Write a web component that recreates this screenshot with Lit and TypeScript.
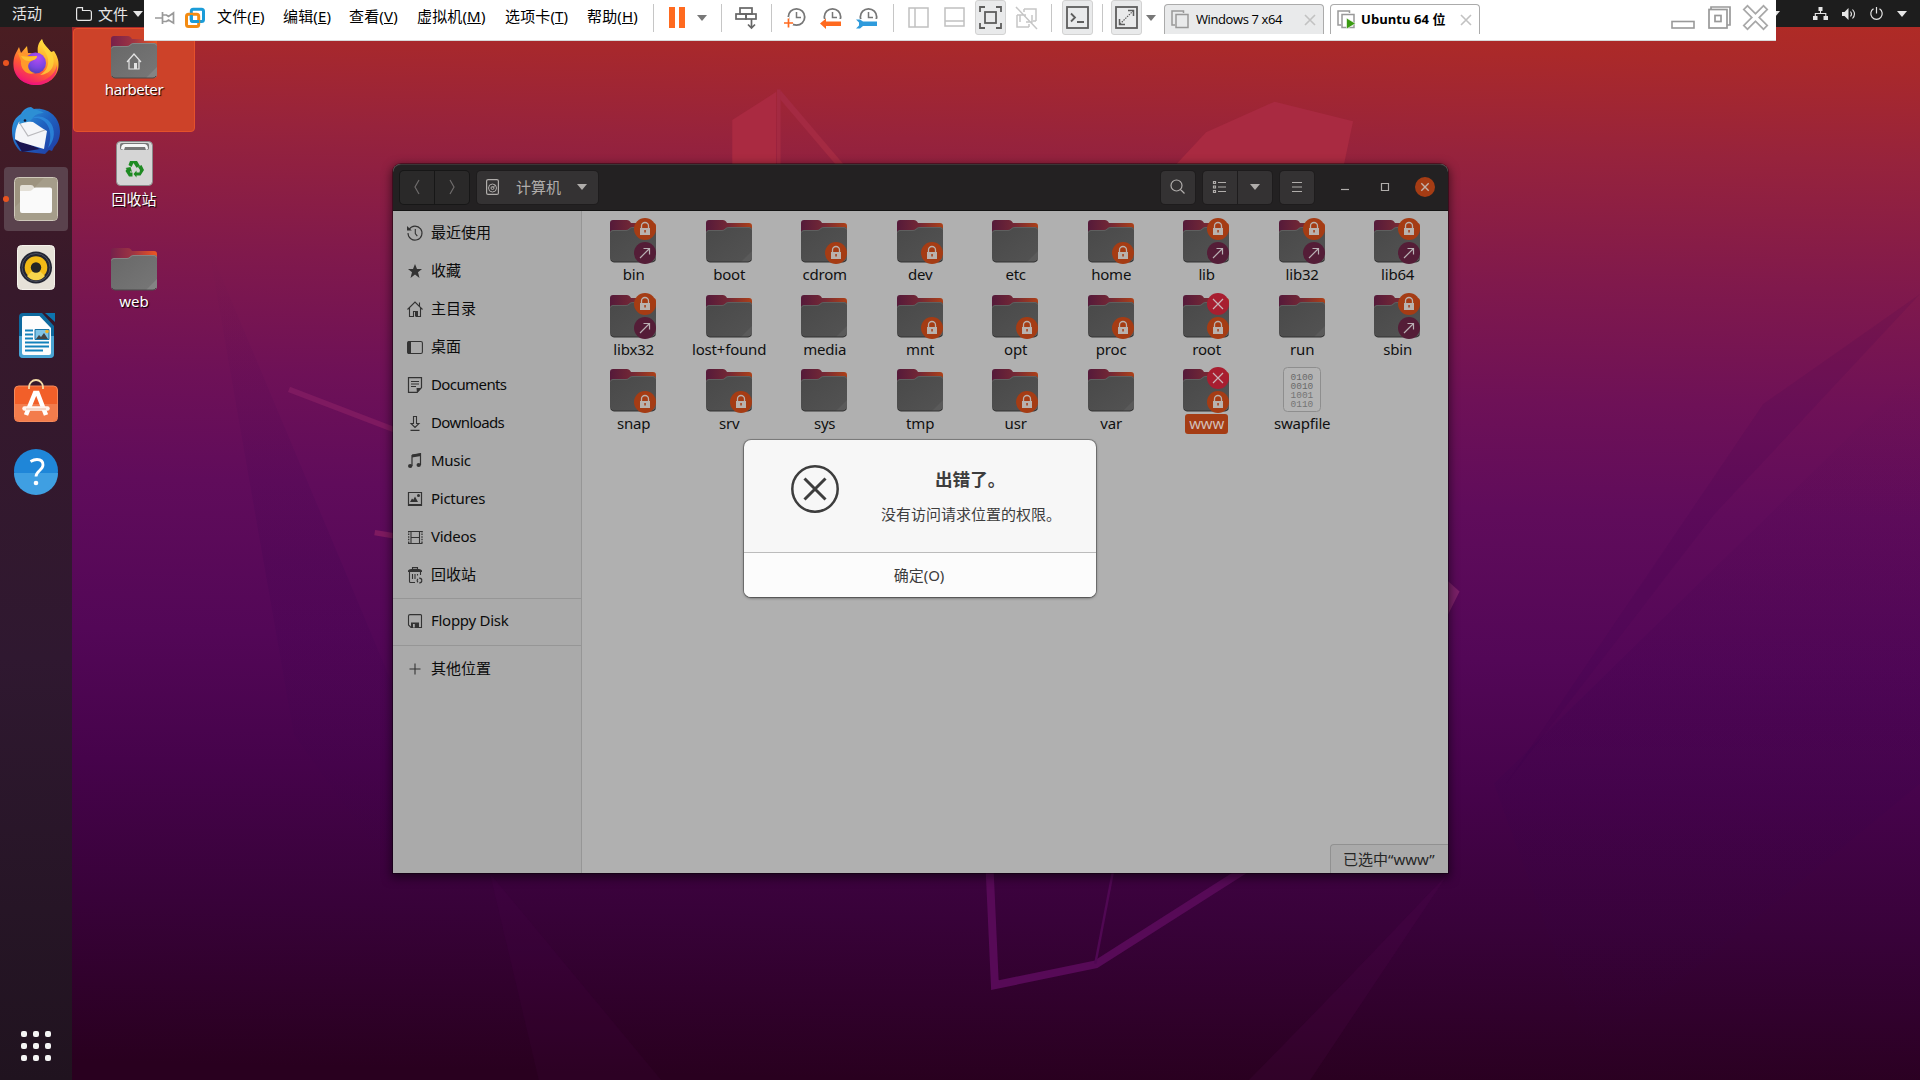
import { LitElement, html, css, svg } from "lit";
import { customElement } from "lit/decorators.js";

type Emblem = "lock" | "link" | "deny";
interface Entry { name: string; emblems?: Emblem[]; kind?: "file"; selected?: boolean; }

const L: Emblem[] = ["lock"];
const LL: Emblem[] = ["lock", "link"];
const DL: Emblem[] = ["deny", "lock"];

const entries: Entry[] = [
  { name: "bin", emblems: LL }, { name: "boot" }, { name: "cdrom", emblems: L }, { name: "dev", emblems: L },
  { name: "etc" }, { name: "home", emblems: L }, { name: "lib", emblems: LL }, { name: "lib32", emblems: LL },
  { name: "lib64", emblems: LL }, { name: "libx32", emblems: LL }, { name: "lost+found" }, { name: "media" },
  { name: "mnt", emblems: L }, { name: "opt", emblems: L }, { name: "proc", emblems: L }, { name: "root", emblems: DL },
  { name: "run" }, { name: "sbin", emblems: LL }, { name: "snap", emblems: L }, { name: "srv", emblems: L },
  { name: "sys" }, { name: "tmp" }, { name: "usr", emblems: L }, { name: "var" },
  { name: "www", emblems: DL, selected: true }, { name: "swapfile", kind: "file" },
];

const icon16 = (body: unknown) => html`<svg class="i16" viewBox="0 0 16 16" width="16" height="16">${body}</svg>`;

const side = {
  recent: svg`<path d="M2.2 4.2A7 7 0 1 1 1 8" fill="none" stroke="#333" stroke-width="1.1"/><path d="M0 1v4.5h4.8z" fill="#333"/><path d="M8.3 4v4.5l2 2.6" fill="none" stroke="#333" stroke-width="1.1"/>`,
  star: svg`<path d="M8 1l2 5h5l-4 3.2L12.5 15 8 11.6 3.500 15 5 9.200 1 6h5z" fill="#333"/>`,
  home: svg`<path d="M.5 8.500L8 1l7.500 7.500M2.500 7v8.500h4v-5h3v5h4V7M12.500 5V1.500" fill="none" stroke="#333" stroke-width="1.100"/><path d="M8 10h3v5.500H8z" fill="#333"/>`,
  desktop: svg`<rect x=".6" y="2.500" width="14.800" height="12" rx="1.500" fill="none" stroke="#333" stroke-width="1.100"/><path d="M.5 3.500Q.5 2 2 2h2v13H2q-1.500 0-1.500-1.500z" fill="#333"/>`,
  documents: svg`<path d="M1.500.6h13v10l-4.500 4.800H1.500z" fill="none" stroke="#333" stroke-width="1.200"/><path d="M4 4.500h8M4 7h8M4 9.500h5" stroke="#333"/><path d="M9.500 11h5l-4.500 5z" fill="#333"/>`,
  downloads: svg`<path d="M6.500 1.500h3v7H12l-4 4-4-4h2.500zM3.500 15.400h9" fill="none" stroke="#333" stroke-width="1.100"/>`,
  music: svg`<path d="M5 13V2.500L13.500 1v11" fill="none" stroke="#333" stroke-width="1.200"/><path d="M5 1.500L14 0v3L5 4.500z" fill="#333"/><ellipse cx="3.200" cy="13" rx="2.200" ry="1.900" fill="#333"/><ellipse cx="11.700" cy="12" rx="2.200" ry="1.900" fill="#333"/>`,
  pictures: svg`<path d="M1.500 1.500h13v13h-13z" fill="none" stroke="#333" stroke-width="1.200"/><path d="M1 13h14v2H1zM3 11l2-3.500 1.300 1.300L8 5.500l3 5.500z" fill="#333"/><circle cx="11.500" cy="4.500" r="1.500" fill="#333"/>`,
  videos: svg`<path d="M1 2.500h14.500M1 14.500h14.500M4 2.500v12M12.500 2.500v12M4 8.500h8.500" stroke="#333" stroke-width="1.100" fill="none"/><path d="M1.700 2v13M15 2v13" stroke="#333" stroke-width="1.300" stroke-dasharray="1.500 1.100"/>`,
  trash: svg`<path d="M1 3.500Q2 2 4 2h8q2 0 3 1.500v1.500H1z" fill="#333"/><path d="M5.500 2V.6h5V2M2.500 5v9.500q0 1 1 1H8M13.500 5v3M5.500 7v5M8 7v5M10.500 7v1.500" fill="none" stroke="#333" stroke-width="1.100"/><circle cx="12.500" cy="13.500" r="2.300" fill="none" stroke="#333" stroke-width="1.200" stroke-dasharray="3.500 1.200"/>`,
  floppy: svg`<path d="M3 1.600h10.500q1 0 1 1v11.900H4l-2.500-2.500V3q0-1.400 1.500-1.400z" fill="none" stroke="#333" stroke-width="1.100"/><path d="M4 9.500h8v5.500H4z" fill="#333"/><path d="M6 11h1.800v3.500H6z" fill="#aaa"/>`,
  plus: svg`<path d="M8 2.500v11M2.500 8h11" stroke="#333" stroke-width="1.100"/>`,
};

const places: [unknown, string, string][] = [
  [side.recent, "最近使用", "zh"], [side.star, "收藏", "zh"], [side.home, "主目录", "zh"], [side.desktop, "桌面", "zh"],
  [side.documents, "Documents", "tight"], [side.downloads, "Downloads", "tight"], [side.music, "Music", ""],
  [side.pictures, "Pictures", ""], [side.videos, "Videos", ""], [side.trash, "回收站", "zh"],
];

const emblem = (e: Emblem, y: number) => {
  const fill = e === "lock" ? "#a53c14" : e === "link" ? "#541d37" : "#a81e30";
  return svg`<circle cx="35" cy=${y} r="11" fill=${fill}/>
    ${e === "lock" ? svg`<path d=${`M30 ${y - 1}h10v7H30z`} fill="#b9b2ae"/><path d=${`M31.500 ${y - 1}v-2a3.500 3.500 0 0 1 7 0v2`} fill="none" stroke="#b9b2ae" stroke-width="1.300"/><path d=${`M34.300 ${y + 1}h1.500v2.500h-1.500z`} fill="#a53c14"/>` : ""}
    ${e === "link" ? svg`<path d=${`M30 ${y + 5}l9.500-9.500M33.500 ${y - 4.500}h6v6`} fill="none" stroke="#b9b0b4" stroke-width="1.200"/>` : ""}
    ${e === "deny" ? svg`<path d=${`M30 ${y - 5}l10 10M40 ${y - 5}l-10 10`} stroke="#c9b4b8" stroke-width="1.200"/>` : ""}`;
};

const clock = (extra: unknown) => html`<svg width="22" height="22" viewBox="0 0 22 22">
  <circle cx="12.500" cy="10" r="8.200" fill="none" stroke="#777" stroke-width="1.800"/><path d="M12.500 5v5.500h4.500" fill="none" stroke="#777" stroke-width="1.500"/>${extra}</svg>`;

@customElement("app-root")
export class AppRoot extends LitElement {
  static styles = css`
    :host { display: block; width: 1920px; height: 1080px; font-family: "Noto Sans", "Noto Sans CJK SC", sans-serif; font-size: 15px; line-height: 1; }
    * { box-sizing: border-box; }
    svg { display: block; flex: none; overflow: visible; }
    .screen { position: relative; width: 1920px; height: 1080px; overflow: hidden; display: flex; flex-direction: column; }
    .wall { position: absolute; inset: 0; }
    .defs { position: absolute; width: 0; height: 0; }
    .top { position: relative; height: 27px; background: #1d1d1d; color: #e6e6e6; display: flex; align-items: center; padding: 0 13px 0 12px; }
    .top .act { width: 64px; }
    .top .app { display: flex; align-items: center; gap: 6px; padding-top: 1px; }
    .top .app span { margin-right: -1px; }
    .top .tray { margin-left: auto; display: flex; align-items: center; gap: 14px; }
    .main { position: relative; flex: 1; display: flex; min-height: 0; }
    .dock { width: 72px; background: linear-gradient(#4a1d22, #37192b 25%, #2f1830 60%, #20131f); display: flex; flex-direction: column; align-items: center; padding-top: 2px; }
    .slot { width: 72px; height: 68px; display: flex; align-items: center; justify-content: center; position: relative; }
    .slot.first svg { margin-bottom: 2px; }
    .slot.bag svg { margin-bottom: 5px; }
    .slot.on::before { content: ""; position: absolute; inset: 2px 4px; border-radius: 4px; background: #5a424d; }
    .slot svg { position: relative; }
    .slot.run::after { content: ""; position: absolute; left: 3px; top: 31px; width: 6px; height: 6px; border-radius: 50%; background: #e95420; }
    .apps { margin-top: auto; margin-bottom: 19px; display: grid; grid-template-columns: repeat(3, 6px); gap: 6px; }
    .apps i { width: 6px; height: 6px; border-radius: 2px; background: #f4f4f4; }
    .desk { padding: 1px; display: flex; flex-direction: column; gap: 2px; }
    .di { width: 122px; height: 104px; display: flex; flex-direction: column; align-items: center; padding-top: 7px; gap: 4px; color: #fff; text-shadow: 1px 1px 1px #000; line-height: 18px; }
    .di.dir { padding-top: 8px; gap: 1px; }
    .di.sel { background: #cd4229; border: 1px solid #e5512a; border-radius: 4px; padding-top: 7px; letter-spacing: -0.4px; }
    .vm { position: absolute; left: 144px; top: 0; width: 1632px; height: 41px; background: #fff; border-bottom: 1px solid #d8d8d8; display: flex; color: #000; }
    .vm .cell { display: flex; justify-content: center; align-items: center; height: 35px; flex: none; }
    .vm .tool svg { margin-right: 2px; }
    .vm .sep { width: 1px; height: 28px; margin-top: 4px; background: #c6c6c6; flex: none; }
    .vm .menu { display: grid; grid-template-columns: 66px 66px 68px 88px 82px 66px; padding-top: 9px; margin-left: 12px; letter-spacing: 0.15px; white-space: nowrap; }
    .vm .on { background: #e9eaeb; border: 1px solid #d2d2d2; border-radius: 3px; }
    .vm .on svg { margin-right: 1px; }
    .tab { margin-top: 4px; height: 30px; border: 1px solid #ababab; border-bottom: none; border-radius: 4px 4px 0 0; display: flex; align-items: center; padding: 0 7px 0 6px; gap: 6px; font-family: "Open Sans", "Noto Sans CJK SC", sans-serif; font-size: 13px; flex: none; white-space: nowrap; letter-spacing: -0.4px; }
    .tab .x { margin-left: auto; }
    .tab.idle { background: #e9eaeb; }
    .tab b { letter-spacing: 0.05px; margin-left: -1px; }
    .wb { margin-left: auto; display: flex; padding-right: 3px; }
    .win { position: absolute; left: 393px; top: 164px; width: 1055px; height: 709px; border-radius: 8px 8px 0 0; background: #b0b0b0; box-shadow: 0 0 0 1px rgba(0,0,0,.35), 0 3px 10px 2px rgba(0,0,0,.5); display: flex; flex-direction: column; }
    .head { height: 47px; background: #232122; border-radius: 8px 8px 0 0; border-top: 1px solid #3a3536; border-bottom: 1px solid #141414; display: flex; align-items: center; padding: 0 13px 1px 7px; color: #b0adab; }
    .btn { height: 33px; background: #343233; border-radius: 4px; display: flex; align-items: center; justify-content: center; width: 34px; box-shadow: 0 0 0 1px #1e1c1d; }
    .btn.nav { background: #2a2929; box-shadow: 0 0 0 1px #171717; }
    .btn.l { border-radius: 4px 0 0 4px; }
    .btn.r { border-radius: 0 4px 4px 0; margin-left: 1px; }
    .path { width: 121px; margin-left: 8px; justify-content: flex-start; padding-left: 9px; }
    .path span { margin: 0 16px 0 17px; }
    .ctl { width: 40px; display: flex; justify-content: center; }
    .body { flex: 1; display: flex; min-height: 0; }
    .side { width: 189px; background: #aaa; border-right: 1px solid #969696; padding-top: 3px; color: #0c0c0c; }
    .row { height: 38px; display: flex; align-items: center; gap: 8px; padding-left: 14px; font-size: 15px; }
    .row span { letter-spacing: -0.28px; padding-bottom: 1px; }
    .row span.zh { letter-spacing: 0; }
    .row span.tight { letter-spacing: -0.6px; }
    .ln { height: 1px; background: #969696; margin: 4px 0 3px; }
    .ln.second { margin: 5px 0 4px; }
    .content { flex: 1; display: flex; flex-direction: column; position: relative; }
    .grid { display: grid; grid-template-columns: repeat(9, 95.5px); grid-auto-rows: 74.5px; padding: 4px 0 0 3.4px; color: #101010; }
    .it { display: flex; flex-direction: column; align-items: center; }
    .it span { margin: 2px 0 0 1px; padding: 1px 4px 2px; line-height: 17px; border-radius: 3px; letter-spacing: -0.2px; }
    .it.sel span { background: #a53c14; color: #d2bfb7; }
    .status { margin-top: auto; align-self: flex-end; width: 118px; height: 29px; border: 1px solid #919191; border-right: none; border-bottom: none; border-radius: 4px 0 0 0; background: #aaa; padding: 7px 0 0 12px; color: #262626; white-space: nowrap; }
    .dlg { position: absolute; left: 744px; top: 440px; width: 352px; height: 157px; border-radius: 7px; background: #f7f7f7; box-shadow: 0 0 0 1px rgba(0,0,0,.25), 0 1px 3px rgba(0,0,0,.5); display: flex; flex-direction: column; color: #3d3d3d; }
    .msg { flex: 1; display: flex; padding: 25px 20px 0 47px; }
    .msg .tx { margin-left: 42px; display: flex; flex-direction: column; gap: 18px; font-family: "Noto Sans CJK SC", sans-serif; white-space: nowrap; }
    .msg h1 { font-size: 17.6px; margin: 5px 0 0 54px; font-weight: 700; line-height: 18px; }
    .ok { height: 45px; border-top: 1px solid #bcbcbc; background: #fcfcfc; border-radius: 0 0 7px 7px; display: flex; align-items: center; justify-content: center; padding-right: 2px; }
  `;

  private caret(c: string, w = 10) {
    return html`<svg width=${w} height="6" viewBox="0 0 10 6"><path d="M0 0h10L5 6z" fill=${c}/></svg>`;
  }

  private wallpaper() {
    return html`<svg class="wall" width="1920" height="1080" viewBox="0 0 1568 882">
      <defs><linearGradient id="wg" x1="0.52" y1="0" x2="0.48" y2="1">
        <stop offset="0" stop-color="#b02b25"/><stop offset=".04" stop-color="#aa292a"/><stop offset=".13" stop-color="#97233c"/><stop offset=".25" stop-color="#80194c"/>
        <stop offset=".36" stop-color="#6e1157"/><stop offset=".46" stop-color="#600c5b"/><stop offset=".6" stop-color="#530757"/><stop offset=".72" stop-color="#46034b"/>
        <stop offset=".85" stop-color="#380239"/><stop offset="1" stop-color="#29001f"/></linearGradient>
        <linearGradient id="fa" x1="0" y1="0" x2="0" y2="1"><stop offset="0" stop-color="#30004c" stop-opacity="0"/><stop offset=".5" stop-color="#30004c" stop-opacity=".14"/><stop offset="1" stop-color="#30004c" stop-opacity="0"/></linearGradient></defs>
      <rect width="1568" height="882" fill="url(#wg)"/>
      <path d="M170 200L321 560V713L240 600z" fill="url(#fa)"/>
      <path d="M1568 240L1400 420L1230 640L1440 330z" fill="#30004c" opacity=".1"/>
      <path d="M1568 300V640L1300 860L1220 640z" fill="url(#fa)"/>
      <path d="M1183 713L1070 882H1020L1100 800z" fill="#6a1060" opacity=".12"/>
      <path d="M400 713L540 882H440z" fill="#6a1060" opacity=".08"/>
      <path d="M598 98L634 75V136H598z" fill="#aa2a41"/><path d="M636 76L688 137" stroke="#a42a42" stroke-width="5"/><path d="M636 73V137" stroke="#a42a42" stroke-width="3"/>
      <path d="M985 108L1041 83L1105 99L1097 137H958z" fill="#a92a41"/>
      <path d="M236 318L330 354M306 435L330 439" stroke="#7e1a60" stroke-width="4.500"/>
      <path d="M1182 474l10 9-10 20z" fill="#7a2068"/>
      <path d="M808 706L812.500 804.500L895 787.500L1020 708" fill="none" stroke="#570a57" stroke-width="6.500"/>
      <path d="M910 706L894.500 787" stroke="#500853" stroke-width="2"/>
    </svg>`;
  }

  private symbols() {
    return html`<svg class="defs"><defs>
      <linearGradient id="fb" x1="0" y1="0" x2="1" y2="0"><stop offset="0" stop-color="#77214b"/><stop offset=".5" stop-color="#a03542"/><stop offset="1" stop-color="#ee5722"/></linearGradient>
      <linearGradient id="fbd" x1="0" y1="0" x2="1" y2="0"><stop offset="0" stop-color="#551a3a"/><stop offset=".5" stop-color="#742835"/><stop offset="1" stop-color="#ad4118"/></linearGradient>
      <linearGradient id="ff" x1="0" y1="0" x2="1" y2="1"><stop offset="0" stop-color="#686868"/><stop offset="1" stop-color="#777"/></linearGradient>
      <linearGradient id="ffd" x1="0" y1="0" x2="1" y2="1"><stop offset="0" stop-color="#494949"/><stop offset="1" stop-color="#535353"/></linearGradient>
      <symbol id="folder" viewBox="0 0 46 43"><path d="M3 0h14q2 0 3 1.500l1 1.500h22q3 0 3 3v20H0V3q0-3 3-3z" fill="url(#fb)"/>
        <path d="M0 13q0-3 3-3h13q2 0 3-1.200l1-.9q1-.9 3-.9h20q3 0 3 3v28q0 4-4 4H4q-4 0-4-4z" fill="url(#ff)"/><path d="M.5 12.500q.5-2 2.500-2h13q2 0 3-1.200l1-.9q1-.9 3-.9h20q2 0 2.500 2" fill="none" stroke="#8b8b8b" stroke-width=".8"/><path d="M46 31L35 42h7q4 0 4-4z" fill="#838383"/><path d="M1 40q1 2 3 2h38q2 0 3-2" fill="none" stroke="#484848"/></symbol>
      <symbol id="folderd" viewBox="0 0 46 43"><path d="M3 0h14q2 0 3 1.500l1 1.500h22q3 0 3 3v20H0V3q0-3 3-3z" fill="url(#fbd)"/>
        <path d="M0 13q0-3 3-3h13q2 0 3-1.200l1-.9q1-.9 3-.9h20q3 0 3 3v28q0 4-4 4H4q-4 0-4-4z" fill="url(#ffd)"/><path d="M.5 12.500q.5-2 2.500-2h13q2 0 3-1.200l1-.9q1-.9 3-.9h20q2 0 2.500 2" fill="none" stroke="#656565" stroke-width=".8"/><path d="M46 31L35 42h7q4 0 4-4z" fill="#5a5a5a"/><path d="M1 40q1 2 3 2h38q2 0 3-2" fill="none" stroke="#333"/></symbol>
    </defs></svg>`;
  }

  private dock() {
    return html`<div class="dock">
      <div class="slot run first"><svg width="46" height="46" viewBox="0 0 46 46">
        <defs><linearGradient id="fx" x1=".8" y1="0" x2=".3" y2="1"><stop offset="0" stop-color="#fff04a"/><stop offset=".35" stop-color="#ffb62e"/><stop offset=".65" stop-color="#ff5b34"/><stop offset="1" stop-color="#f0107a"/></linearGradient>
        <radialGradient id="fp" cx=".6" cy=".25" r=".8"><stop offset="0" stop-color="#b44cf2"/><stop offset=".6" stop-color="#7a45e0"/><stop offset="1" stop-color="#4f3fae"/></radialGradient></defs>
        <path d="M29 0c1 5 5 8 9 13l3-1c3 5 5 9 4.500 15C45 38 35 46 23 46S1 38 .5 27C0 20 2 15 4 12l2-4 2 6 6-7 1 7c6 0 8 3 10 2 0-4-2-10 4-16z" fill="url(#fx)"/>
        <path d="M2 31c4 12 17 15 27 11 9-3 14-10 15-16 1 12-9 20-21 20C11 46 3 39 2 31z" fill="#ee1280" opacity=".6"/>
        <circle cx="22.500" cy="24" r="10.500" fill="url(#fp)"/><path d="M5 14c4-1 7 1 10 3h9c0 4-5 4-7 6-4 4-1 10 5 11-8 3-15-4-14-12z" fill="#ff9a2a"/><path d="M8 17l8 1 8-1c0 4-5 4-7 5-4 0-7-1-9-5z" fill="#ffc02f"/><path d="M29 0c-3 8 5 12 6 20s-3 13-8 16c13-1 17-13 11-23-4-5-8-8-9-13z" fill="#ffd83a" opacity=".75"/></svg></div>
      <div class="slot"><svg width="48" height="48" viewBox="0 0 48 48">
        <defs><linearGradient id="tb" x1="0" y1="0" x2="1" y2="1"><stop offset="0" stop-color="#35a8e8"/><stop offset=".5" stop-color="#1f62c0"/><stop offset="1" stop-color="#2038a0"/></linearGradient></defs>
        <path d="M19 0l3 2c14-2 26 8 26 22 0 8-3 13-6 16l-2 4-3-1-4 4-9-1L8 44C2 38 0 31 0 24 0 15 4 10 9 7c2-4 6-7 10-7z" fill="url(#tb)"/>
        <path d="M3 33l7 12L28 42 12 35z" fill="#1a1450"/><path d="M7 15l4-1 10 1 12 8 2 1-3 18L8 35 3 32c0-7 1-12 4-17z" fill="#f4f5f8"/><path d="M7 15l9 14 17-6" fill="none" stroke="#b9b9bd" stroke-width="1.200"/>
        <path d="M10 9c5-8 14-8 22-3-5 0-10 2-12 6-3 4-8 3-13 5z" fill="#2d8fd4"/><path d="M18 13c4-4 14-2 18 6 3 6 3 14 0 22 5-6 8-14 4-23C35 9 24 7 18 13z" fill="#2f8fe0" opacity=".75"/><circle cx="13" cy="13.500" r="1.300" fill="#14142c"/></svg></div>
      <div class="slot on run"><svg width="44" height="44" viewBox="0 0 44 44"><rect x=".5" y=".5" width="43" height="43" rx="4" fill="#9d937f" stroke="#cfc9bb"/><path d="M1 30L30 1h10q3 0 3 3v36q0 3-3 3H4q-3 0-3-3z" fill="#a59d8a"/><path d="M6 10q0-2 2-2h9q2 0 3 2l1 2h12v8H6z" fill="#e3dfd6"/><path d="M6 14h9q2 0 3-1l1.500-1.500q1-1 2.500-1h14q2 0 2 2V34q0 2-2 2H8q-2 0-2-2z" fill="#fafafa"/></svg></div>
      <div class="slot"><svg width="38" height="45" viewBox="0 0 38 45"><rect x=".5" y=".5" width="37" height="44" rx="4" fill="#e6e1d8" stroke="#f5f2ec"/><circle cx="19" cy="22.500" r="16" fill="#232532"/><circle cx="19" cy="22.500" r="14" fill="none" stroke="#4c5060"/><circle cx="19" cy="22.500" r="11.300" fill="#f2ba16"/><path d="M19 22.500L10 31A11.500 11.500 0 0 0 28 31z" fill="#f7d44c"/><circle cx="19" cy="22.500" r="5.200" fill="#252525"/></svg></div>
      <div class="slot"><svg width="37" height="45" viewBox="0 0 37 45"><path d="M5 0h19l12 13v28q0 4-4 4H5q-4 0-4-4V4q0-4 4-4z" fill="#0e6a9f"/><path d="M1 23h35v18q0 4-4 4H5q-4 0-4-4z" fill="#4aa4d3"/><path d="M27 0h10v9z" fill="#0d74ae"/><path d="M6 3h15.500L33 15v25q0 2-2 2H6q-2 0-2-2V5q0-2 2-2z" fill="#fdfdfd"/><path d="M7 17.500h8M7 21.500h8M7 25.500h8M7 29.500h24M7 33.500h24M7 37.500h18" stroke="#1281bb" stroke-width="2"/><path d="M17 16.500h14v10H17z" fill="#7fc4e6" stroke="#1674a8"/><path d="M18 26l3-4 2 2 3-4 4 6z" fill="#444"/><circle cx="29" cy="18.500" r="1.800" fill="#efb52a"/></svg></div>
      <div class="slot bag"><svg width="44" height="42" viewBox="0 0 44 42"><rect x=".5" y="6" width="43" height="35.500" rx="4" fill="#f25f29" stroke="#f58a5c"/><path d="M1 24h42v13q0 4-4 4H5q-4 0-4-4z" fill="#f37c4c"/><path d="M15 9V7a7 7 0 0 1 14 0v2" fill="none" stroke="#f6dca8" stroke-width="1.800"/><path d="M12 35L21 13h2.500L32 35" fill="none" stroke="#fff" stroke-width="4.500"/><path d="M10.500 28.500h23" stroke="#fff5ef" stroke-width="4.500" stroke-linecap="round"/><path d="M12 29h20" stroke="#e8bba6" stroke-width="1"/></svg></div>
      <div class="slot"><svg width="44" height="44" viewBox="0 0 44 44"><circle cx="22" cy="22" r="22" fill="#1f86d8"/><path d="M0 24h44a22 22 0 0 1-44 0z" fill="#3f9fe2"/><path d="M16.500 12.500q3.500-2 6.500-2 6 0 6 5.500c0 5-7 6-7 11.500" fill="none" stroke="#fff" stroke-width="2.800"/><circle cx="22" cy="34" r="2.300" fill="#fff"/></svg></div>
      <div class="apps">${Array.from({ length: 9 }, () => html`<i></i>`)}</div>
    </div>`;
  }

  private desktop() {
    return html`<div class="desk">
      <div class="di dir sel"><svg width="46" height="43"><use href="#folder"/><path d="M16 26l7-8 7 8M18 24v9h10v-9" fill="none" stroke="#e4e4e4" stroke-width="1.200"/><path d="M23 27h3v6h-3z" fill="#e4e4e4"/></svg><span>harbeter</span></div>
      <div class="di"><svg width="37" height="45" viewBox="0 0 37 45"><rect x=".5" y=".5" width="36" height="44" rx="4" fill="#d5d5d5" stroke="#8a8a8a"/><rect x="4" y="2" width="29" height="7" rx="2" fill="#777"/><path d="M5 8q0-5 4-5h19q4 0 4 5l-2 1-1-3H9L8 9z" fill="#f6f6f6"/><g fill="#1e8a22"><path d="M14 20h7l3 5-3.500 1.800L17.500 22l-2 4-3-2z"/><path d="M25.500 24l2.500 5-3.500 5.500h-4v2L17.500 33l3-3.500v2h3L24 29l-2-3z"/><path d="M9.500 27l5-1 1.500 5-1.500-1-.5 1.500h2.500v4H13l-3.500-5.500 1.200-2z"/></g></svg><span>回收站</span></div>
      <div class="di dir"><svg width="46" height="43"><use href="#folder"/></svg><span>web</span></div>
    </div>`;
  }

  private toolbar() {
    const menus: [string, string][] = [["文件", "F"], ["编辑", "E"], ["查看", "V"], ["虚拟机", "M"], ["选项卡", "T"], ["帮助", "H"]];
    const cell = (ml: number, w: number, body: unknown, cls = "tool") => html`<div class="cell ${cls}" style="margin-left:${ml}px;width:${w}px">${body}</div>`;
    const sep = (ml: number) => html`<i class="sep" style="margin-left:${ml}px"></i>`;
    const pages = (play: boolean) => html`<svg width="19" height="20" viewBox="0 0 19 20"><path d="M12.500 3V1H1v14h3" fill="none" stroke="#999" stroke-width="1.500"/><rect x="5" y="4.500" width="12" height="13" fill="none" stroke="#999" stroke-width="1.500"/>${play ? svg`<path d="M9.500 8v11l9-5.500z" fill="#3b9b12" stroke="#fff" stroke-width=".6"/>` : ""}</svg>`;
    const x = html`<svg class="x" width="12" height="12" viewBox="0 0 12 12"><path d="M1 1l10 10M11 1L1 11" stroke="#c2c2c2" stroke-width="1.600"/></svg>`;
    return html`<div class="vm">
      ${cell(0, 41, html`<svg width="20" height="14" viewBox="0 0 20 14"><path d="M0 7h7M7.500 1v12M7.500 4h4l2 1.500L18.500 2v10L13.500 9l-2 1.500h-4" fill="none" stroke="#999" stroke-width="1.700"/></svg>`, "")}
      ${cell(0, 20, html`<svg width="20" height="20" viewBox="0 0 20 20"><rect x="6.300" y="1.300" width="12.200" height="12.200" rx="2" fill="none" stroke="#1b9cd8" stroke-width="3"/><rect x="1.500" y="6.300" width="12.200" height="12.200" rx="2" fill="none" stroke="#f38b12" stroke-width="3"/><path d="M6.300 7v4.500q0 2 2 2h6" fill="none" stroke="#1b9cd8" stroke-width="3"/></svg>`, "")}
      <div class="menu">${menus.map(([t, k]) => html`<span>${t}(<u>${k}</u>)</span>`)}</div>
      ${sep(0)}
      ${cell(8, 32, html`<svg width="16" height="21"><path d="M0 0h6v21H0zM10 0h6v21h-6z" fill="#ff6a1f"/></svg>`)}
      ${cell(1, 16, this.caret("#777"))}${sep(10)}
      ${cell(12, 26, html`<svg width="22" height="22" viewBox="0 0 22 22" fill="none" stroke="#666" stroke-width="1.700"><rect x="5" y="1" width="12" height="6"/><rect x="1" y="7" width="10" height="5"/><rect x="11" y="7" width="10" height="5"/><path d="M16.500 12v9M13 17.500l3.500 3.500 3.500-3.500"/></svg>`)}${sep(11)}
      ${cell(6, 36, clock(svg`<path d="M0 10h5v5H0z" fill="#fff"/><path d="M0 16h9M4.500 11.500v9" stroke="#fff" stroke-width="4"/><path d="M0 16h9M4.500 11.500v9" stroke="#ff6a1f" stroke-width="1.700"/>`))}
      ${cell(0, 36, clock(svg`<path d="M0 12h22v9H0z" fill="#fff"/><path d="M0 16.500l6-5v3h15v4.500H6v3z" fill="#ff6a1f"/>`))}
      ${cell(0, 36, clock(svg`<path d="M0 12h22v9H0z" fill="#fff"/><path d="M0 12.500h4l3 2h14v4.500H7l-3 2.500H0l3-3v-3z" fill="#2f9bdc"/>`))}${sep(7)}
      ${cell(7, 36, html`<svg width="21" height="21" viewBox="0 0 21 21" fill="none" stroke="#c0c0c0" stroke-width="1.500"><rect x="1" y="1" width="19" height="19"/><path d="M7 1v19"/></svg>`)}
      ${cell(0, 36, html`<svg width="21" height="21" viewBox="0 0 21 21" fill="none" stroke="#c0c0c0" stroke-width="1.500"><rect x="1" y="1" width="19" height="18"/><path d="M1 14h19"/></svg>`)}
      ${cell(2, 31, html`<svg width="23" height="23" viewBox="0 0 23 23" fill="none" stroke="#5e5e5e" stroke-width="1.800"><path d="M1 6V1h5M17 1h5v5M22 17v5h-5M6 22H1v-5"/><rect x="6" y="6" width="11" height="11"/></svg>`, "on")}
      ${cell(3, 36, html`<svg width="21" height="22" viewBox="0 0 21 22" fill="none" stroke="#c6c6c6" stroke-width="1.500"><path d="M8 2h12v12M1 8v12h12M4 15V8h6M16 8v7h-6M8 2v3M20 14h-3M1 8h3M13 20v-3M0 0l21 22"/></svg>`)}${sep(6)}
      ${cell(10, 31, html`<svg width="23" height="23" viewBox="0 0 23 23" fill="none" stroke="#5e5e5e" stroke-width="1.800"><rect x="1" y="1" width="21" height="21"/><path d="M5 7.500l4 4-4 4M11 16h7"/></svg>`, "on")}${sep(9)}
      ${cell(8, 31, html`<svg width="23" height="23" viewBox="0 0 23 23" fill="none" stroke="#5e5e5e" stroke-width="1.800"><rect x="1" y="1" width="21" height="21"/><path d="M13 4.500h5.500V10M10 18.500H4.500V13" stroke-width="1.500"/><path d="M5 18L18 5" stroke-width="1.200" stroke-dasharray="1.500 1"/></svg>`, "on")}
      ${cell(0, 18, this.caret("#777"), "")}
      <div class="tab idle" style="margin-left:4px;width:160px">${pages(false)}<span>Windows 7 x64</span>${x}</div>
      <div class="tab" style="margin-left:6px;width:150px">${pages(true)}<b>Ubuntu 64 位</b>${x}</div>
      <div class="wb">
        ${cell(0, 36, html`<svg width="24" height="23" viewBox="0 0 24 23"><rect x="1" y="15.500" width="22" height="6.500" fill="#fff" stroke="#999" stroke-width="1.600"/></svg>`, "")}
        ${cell(0, 36, html`<svg width="23" height="23" viewBox="0 0 23 23" fill="none" stroke="#999" stroke-width="1.700"><path d="M3 3V1h19v18h-3"/><rect x="1" y="3.500" width="18" height="18.500"/><rect x="7" y="9.500" width="6" height="6"/></svg>`, "")}
        ${cell(0, 36, html`<svg width="23" height="23" viewBox="0 0 23 23"><path d="M3.500 3.500l16 16M19.500 3.500l-16 16" stroke="#a8a8a8" stroke-width="7" stroke-linecap="square"/><path d="M3.500 3.500l16 16M19.500 3.500l-16 16" stroke="#fff" stroke-width="3.600" stroke-linecap="square"/></svg>`, "")}
      </div>
    </div>`;
  }

  private item(e: Entry) {
    const em = e.emblems ?? [];
    const art = e.kind === "file"
      ? html`<svg width="46" height="48" viewBox="0 0 46 48"><rect x="4.500" y="3.500" width="37" height="44" rx="4" fill="#b4b4b4" stroke="#8e8e8e"/><g font-family="Liberation Mono" font-size="9.500" fill="#6a6a6a"><text x="11.500" y="16">0100</text><text x="11.500" y="25">0010</text><text x="11.500" y="34" fill="#757575">1001</text><text x="11.500" y="43" fill="#757575">0110</text></g></svg>`
      : html`<svg width="46" height="48" viewBox="0 0 46 48"><use href="#folderd" y="5" width="46" height="43"/>${em.length === 2 ? emblem(em[0], 14) : ""}${em.length ? emblem(em[em.length - 1], 38) : ""}</svg>`;
    return html`<div class="it ${e.selected ? "sel" : ""}">${art}<span>${e.name}</span></div>`;
  }

  private files() {
    const s = (d: string) => html`<svg width="16" height="16" viewBox="0 0 16 16"><path d=${d} fill="none" stroke="#b0adab" stroke-width="1.200"/></svg>`;
    return html`<div class="win">
      <div class="head">
        <div class="btn nav l"><svg width="8" height="16" viewBox="0 0 8 16"><path d="M6 1L2 8l4 7" fill="none" stroke="#6f6c6c" stroke-width="1.200"/></svg></div>
        <div class="btn nav r"><svg width="8" height="16" viewBox="0 0 8 16"><path d="M2 1l4 7-4 7" fill="none" stroke="#6f6c6c" stroke-width="1.200"/></svg></div>
        <div class="btn path"><svg width="13" height="16" viewBox="0 0 13 16" fill="none" stroke="#b0adab"><rect x=".6" y=".6" width="11.800" height="14.800" rx="1.500" stroke-width="1.200"/><circle cx="6.500" cy="9" r="4"/><circle cx="6.500" cy="9" r="1.500"/><path d="M6.500 9l3-3"/></svg><span>计算机</span>${this.caret("#b0adab")}</div>
        <div class="btn" style="margin-left:auto">${s("M12 6.500a5.500 5.500 0 1 1-11 0a5.500 5.500 0 0 1 11 0M10.500 10.500L14.500 14.500")}</div>
        <div class="btn l" style="margin-left:8px">${s("M1.500 2.500h2v2h-2zM1.500 7h2v2h-2zM1.500 11.500h2v2h-2zM6 3.500h8M6 8h8M6 12.500h8")}</div>
        <div class="btn r">${this.caret("#b0adab")}</div>
        <div class="btn" style="margin-left:8px">${s("M3 3.500h10M3 8h10M3 12.500h10")}</div>
        <div class="ctl" style="margin-left:11px">${s("M4 10.500h8")}</div>
        <div class="ctl">${s("M4.500 4.500h7v7h-7z")}</div>
        <svg width="20" height="20" viewBox="0 0 20 20" style="margin-left:10px"><circle cx="10" cy="10" r="10" fill="#a53c14"/><path d="M6.300 6.300l7.400 7.400M13.700 6.300l-7.400 7.400" stroke="#c3b2aa" stroke-width="1.400"/></svg>
      </div>
      <div class="body">
        <div class="side">
          ${places.map(([ic, t, c]) => html`<div class="row">${icon16(ic)}<span class=${c}>${t}</span></div>`)}
          <div class="ln"></div>
          <div class="row">${icon16(side.floppy)}<span>Floppy Disk</span></div>
          <div class="ln second"></div>
          <div class="row">${icon16(side.plus)}<span class="zh">其他位置</span></div>
        </div>
        <div class="content">
          <div class="grid">${entries.map((e) => this.item(e))}</div>
          <div class="status">已选中“www”</div>
        </div>
      </div>
    </div>`;
  }

  render() {
    return html`<div class="screen">
      ${this.wallpaper()}${this.symbols()}
      <div class="top"><span class="act">活动</span>
        <div class="app"><svg width="16" height="14" viewBox="0 0 16 14"><path d="M.6 11.500V2q0-1.400 1.400-1.400h4.500V3.500h7q1.900 0 1.900 1.900v6q0 1.900-1.900 1.900h-11Q.6 13.400.6 11.500z" fill="none" stroke="#e6e6e6" stroke-width="1.200"/></svg><span>文件</span>${this.caret("#e6e6e6")}</div>
        <div class="tray">
          <svg width="10" height="6" viewBox="0 0 10 6" style="margin-right:19px"><path d="M0 0h10L5 6z" fill="#e6e6e6"/></svg>
          <svg width="15" height="13" viewBox="0 0 15 13"><path d="M5.500 0h4v4h-4zM0 9h4.500v4H0zM10.500 9H15v4h-4.500z" fill="#e6e6e6"/><path d="M7.500 4v3M2.300 9V6.500h10.500V9" fill="none" stroke="#e6e6e6" stroke-width="1.100"/></svg>
          <svg width="14" height="12" viewBox="0 0 14 12"><path d="M0 4h2.500L6.500 0v12l-4-4H0z" fill="#e6e6e6"/><path d="M8.500 3.500q2 2.500 0 5M10.500 1.500q4 4.500 0 9" fill="none" stroke="#e6e6e6" stroke-width="1.100"/></svg>
          <svg width="13" height="13" viewBox="0 0 13 13"><path d="M3.500 1.800a5.700 5.700 0 1 0 6 0M6.500 0v6.500" fill="none" stroke="#e6e6e6" stroke-width="1.200"/></svg>
          ${this.caret("#e6e6e6")}
        </div>
      </div>
      <div class="main">${this.dock()}${this.desktop()}</div>
      ${this.files()}
      <div class="dlg">
        <div class="msg"><svg width="48" height="48" viewBox="0 0 48 48" fill="none" stroke="#3d3d3d"><circle cx="24" cy="24" r="22.700" stroke-width="2.500"/><path d="M13.500 13.500l21 21M34.500 13.500l-21 21" stroke-width="3"/></svg>
          <div class="tx"><h1>出错了。</h1><span>没有访问请求位置的权限。</span></div></div>
        <div class="ok">确定(O)</div>
      </div>
      ${this.toolbar()}
    </div>`;
  }
}
